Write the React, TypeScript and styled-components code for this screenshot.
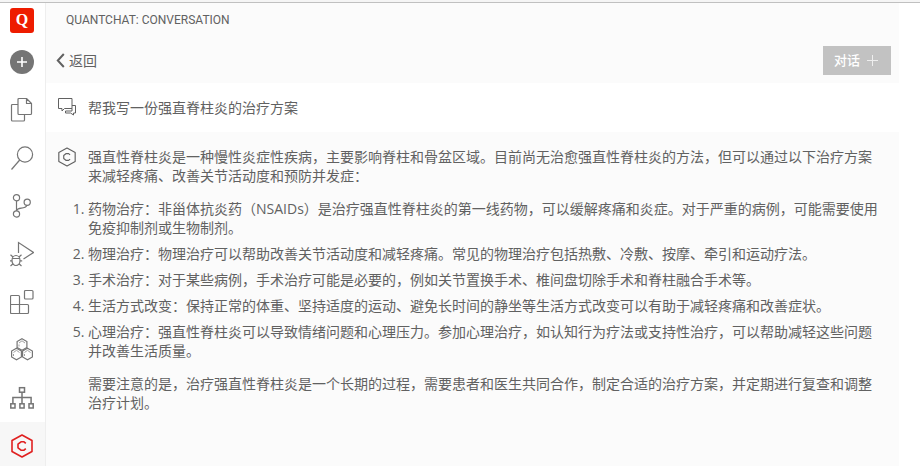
import React from "react";
import styled, { createGlobalStyle } from "styled-components";

const GlobalStyle = createGlobalStyle`
  *, *::before, *::after { box-sizing: border-box; }
  body {
    margin: 0;
    background: #fff;
    color: #616161;
    font: 14px/19px "Open Sans", "Noto Sans CJK SC", sans-serif;
  }
  button { font: inherit; color: inherit; border: 0; background: none; padding: 0; cursor: pointer; }
  svg { display: block; fill: none; flex: none; }
`;

const Page = styled.div`
  display: flex;
  flex-direction: column;
  height: 100vh;
  overflow: hidden;
`;

const TopEdge = styled.div`
  flex: none;
  height: 3px;
  background: #f5f5f5;
  border-bottom: 1px solid #c0c0c0;
`;

const Body = styled.div`
  display: flex;
  flex: 1;
  min-height: 0;
`;

const ActivityBar = styled.nav`
  display: flex;
  flex-direction: column;
  flex: none;
  width: 46px;
  padding-top: 5px;
  border-right: 1px solid #eee;
  overflow: hidden;
`;

const Logo = styled.div`
  flex: none;
  width: 24px;
  height: 25px;
  margin: 0 10px 5px;
  border-radius: 3px;
  background: #ee1c00;
  color: #fff;
  font: bold 16px/24px "Liberation Serif", serif;
  text-align: center;
`;

const ActivityButton = styled.button<{ $active?: boolean }>`
  display: flex;
  flex: none;
  align-items: center;
  justify-content: center;
  width: 100%;
  height: 48px;
  padding-right: 1px;
  color: ${(p) => (p.$active ? "#e02020" : "#757575")};
  background: ${(p) => (p.$active ? "#f7f7f7" : "transparent")};
`;

const Panel = styled.main`
  flex: 1;
  min-width: 0;
  margin-right: 21px;
  background: #fbfbfb;
`;

const PanelHeader = styled.header`
  height: 35px;
  padding: 0 20px;
`;

const PanelTitle = styled.h1`
  margin: 0;
  font: 12px/35px Roboto, "Open Sans", sans-serif;
`;

const Toolbar = styled.div`
  display: flex;
  align-items: center;
  justify-content: space-between;
  height: 45px;
  padding: 0 8px 0 10px;
`;

const BackButton = styled.button`
  display: flex;
  align-items: center;
  gap: 4px;
`;

const NewChatButton = styled.button`
  display: flex;
  align-items: center;
  gap: 7px;
  height: 29px;
  padding: 0 13px 0 11px;
  background: #c2c2c2;
  color: #fff;
  font-size: 13px;
  font-weight: 500;
`;

const Message = styled.section<{ $own?: boolean }>`
  display: flex;
  gap: 12px;
  padding: 15px 16px 15px 12px;
  background: ${(p) => (p.$own ? "#fff" : "#fbfbfb")};
`;

const MessageBody = styled.div`
  flex: 1;
  min-width: 0;
`;

const Paragraph = styled.p`
  margin: 0;
`;

const Steps = styled.ol`
  display: flex;
  flex-direction: column;
  gap: 7px;
  margin: 14px 0;
  padding: 0;
`;

const line = { stroke: "currentColor", strokeWidth: 1.2 };

const PlusCircle = () => (
  <svg width="24" height="24" viewBox="0 0 24 24">
    <circle cx="12" cy="12" r="12" fill="#757575" />
    <path d="M12 7v10M7 12h10" stroke="#fff" strokeWidth="1.6" />
  </svg>
);

const Files = () => (
  <svg width="24" height="26" viewBox="0 0 24 26" {...line} strokeLinejoin="round">
    <path d="M9 1.500h7.500l5 5V16.500q0 1-1 1H9q-1 0-1-1V2.500q0-1 1-1zM16.500 1.500V6.500H21.500" />
    <path d="M8 7.500H2.500q-1 0-1 1V23q0 1 1 1H13.500q1 0 1-1v-5.500" />
  </svg>
);

const Search = () => (
  <svg width="24" height="26" viewBox="0 0 24 26" {...line}>
    <circle cx="15" cy="9.500" r="7.600" />
    <path d="M9.700 15L1.500 24.500" />
  </svg>
);

const Branch = () => (
  <svg width="24" height="26" viewBox="0 0 24 26" {...line}>
    <circle cx="6.500" cy="4.700" r="3.100" />
    <circle cx="6.500" cy="21" r="3.100" />
    <circle cx="17.200" cy="9.200" r="3.100" />
    <path d="M6.500 7.800V17.900M6.500 17.500C8 13.500 15 17 17 12.300" />
  </svg>
);

const Debug = () => (
  <svg width="24" height="26" viewBox="0 0 24 26" {...line}>
    <path d="M8.500 12V1.500L23.500 11.500L13.500 18" />
    <ellipse cx="6" cy="19.500" rx="4" ry="5" />
    <path d="M2.200 17.500h7.600M3 16L.5 13.800M9 16l2.500-2.200M2 19.800H0M10 19.800h2.200M3 22.800L.5 25M9 22.800l2.500 2.200" />
  </svg>
);

const Extensions = () => (
  <svg width="24" height="26" viewBox="0 0 24 26" {...line}>
    <rect x="14.500" y="1.500" width="8.500" height="8.500" rx="1" />
    <path d="M1.500 6.500h7q1 0 1 1v8h8q1 0 1 1v7q0 1-1 1h-16q-1 0-1-1v-16q0-1 1-1zM.5 15.500h9v9" />
  </svg>
);

const cell = (x: number, y: number) => (
  <g key={`${x}-${y}`} transform={`translate(${x} ${y})`}>
    <path d="M0-5.700L4.900-3V3L0 5.700L-4.900 3V-3z" strokeWidth="1.200" />
    <path d="M-3-1.500L0-3.700L3-1.500M-3 0v2" strokeWidth=".7" />
  </g>
);

const Cells = () => (
  <svg width="24" height="26" viewBox="0 0 24 26" stroke="currentColor">
    {cell(12, 7.5)}
    {cell(6.5, 17)}
    {cell(17.5, 17)}
  </svg>
);

const Tree = () => (
  <svg width="24" height="26" viewBox="0 0 24 26" stroke="currentColor" strokeWidth="1.500">
    <rect x="9.500" y="2.700" width="5" height="4.500" />
    <rect x="0.800" y="18.800" width="4.200" height="4.200" />
    <rect x="9.900" y="18.800" width="4.200" height="4.200" />
    <rect x="19" y="18.800" width="4.200" height="4.200" />
    <path d="M12 7.200v11.600M2.900 18.800V12.500h18.200v6.300" />
  </svg>
);

const HexC = ({ width, height, weight }: { width: number; height: number; weight: number }) => (
  <svg width={width} height={height} viewBox="1 0 22 24" stroke="currentColor" strokeWidth={weight} strokeLinejoin="round">
    <path d="M12 1L22 6.500v11L12 23L2 17.500v-11z" />
    <path d="M15.800 9.400L14 7.800h-3L8 10.200v3.600l3 2.400h3L15.800 14.600" />
  </svg>
);

const ChatBubbles = () => (
  <svg width="18" height="19" viewBox="0 0 18 19" stroke="currentColor" strokeWidth="1">
    <path d="M.5 .5h13.500v10H6.500L4 13V10.500H.5z" />
    <path d="M14 7.500h3.500v7.500h-2v2L12.500 15H7.500v-2h6.500V10.500" />
  </svg>
);

const ChevronLeft = () => (
  <svg width="9" height="15" viewBox="0 0 9 15" stroke="currentColor" strokeWidth="2">
    <path d="M7.800 1L1.800 7.500l6 6.500" />
  </svg>
);

const SmallPlus = () => (
  <svg width="11" height="11" viewBox="0 0 11 11" stroke="#eee" strokeWidth="1">
    <path d="M5.500 0v11M0 5.500h11" />
  </svg>
);

const activities = [
  { label: "新建", icon: <PlusCircle /> },
  { label: "资源管理器", icon: <Files /> },
  { label: "搜索", icon: <Search /> },
  { label: "源代码管理", icon: <Branch /> },
  { label: "运行和调试", icon: <Debug /> },
  { label: "扩展", icon: <Extensions /> },
  { label: "模块", icon: <Cells /> },
  { label: "结构", icon: <Tree /> },
  { label: "QuantChat", icon: <HexC width={22} height={24} weight={1.6} />, active: true },
];

const steps = [
  "药物治疗：非甾体抗炎药（NSAIDs）是治疗强直性脊柱炎的第一线药物，可以缓解疼痛和炎症。对于严重的病例，可能需要使用免疫抑制剂或生物制剂。",
  "物理治疗：物理治疗可以帮助改善关节活动度和减轻疼痛。常见的物理治疗包括热敷、冷敷、按摩、牵引和运动疗法。",
  "手术治疗：对于某些病例，手术治疗可能是必要的，例如关节置换手术、椎间盘切除手术和脊柱融合手术等。",
  "生活方式改变：保持正常的体重、坚持适度的运动、避免长时间的静坐等生活方式改变可以有助于减轻疼痛和改善症状。",
  "心理治疗：强直性脊柱炎可以导致情绪问题和心理压力。参加心理治疗，如认知行为疗法或支持性治疗，可以帮助减轻这些问题并改善生活质量。",
];

export default function App() {
  return (
    <Page lang="zh-CN">
      <GlobalStyle />
      <TopEdge />
      <Body>
        <ActivityBar>
          <Logo>Q</Logo>
          {activities.map((a) => (
            <ActivityButton key={a.label} type="button" aria-label={a.label} $active={a.active}>
              {a.icon}
            </ActivityButton>
          ))}
        </ActivityBar>
        <Panel>
          <PanelHeader>
            <PanelTitle>QUANTCHAT: CONVERSATION</PanelTitle>
          </PanelHeader>
          <Toolbar>
            <BackButton type="button">
              <ChevronLeft />
              返回
            </BackButton>
            <NewChatButton type="button">
              对话
              <SmallPlus />
            </NewChatButton>
          </Toolbar>
          <Message $own>
            <ChatBubbles />
            <MessageBody>
              <Paragraph>帮我写一份强直脊柱炎的治疗方案</Paragraph>
            </MessageBody>
          </Message>
          <Message>
            <HexC width={18} height={20} weight={1.4} />
            <MessageBody>
              <Paragraph>
                强直性脊柱炎是一种慢性炎症性疾病，主要影响脊柱和骨盆区域。目前尚无治愈强直性脊柱炎的方法，但可以通过以下治疗方案来减轻疼痛、改善关节活动度和预防并发症：
              </Paragraph>
              <Steps>
                {steps.map((s) => (
                  <li key={s}>{s}</li>
                ))}
              </Steps>
              <Paragraph>
                需要注意的是，治疗强直性脊柱炎是一个长期的过程，需要患者和医生共同合作，制定合适的治疗方案，并定期进行复查和调整治疗计划。
              </Paragraph>
            </MessageBody>
          </Message>
        </Panel>
      </Body>
    </Page>
  );
}
